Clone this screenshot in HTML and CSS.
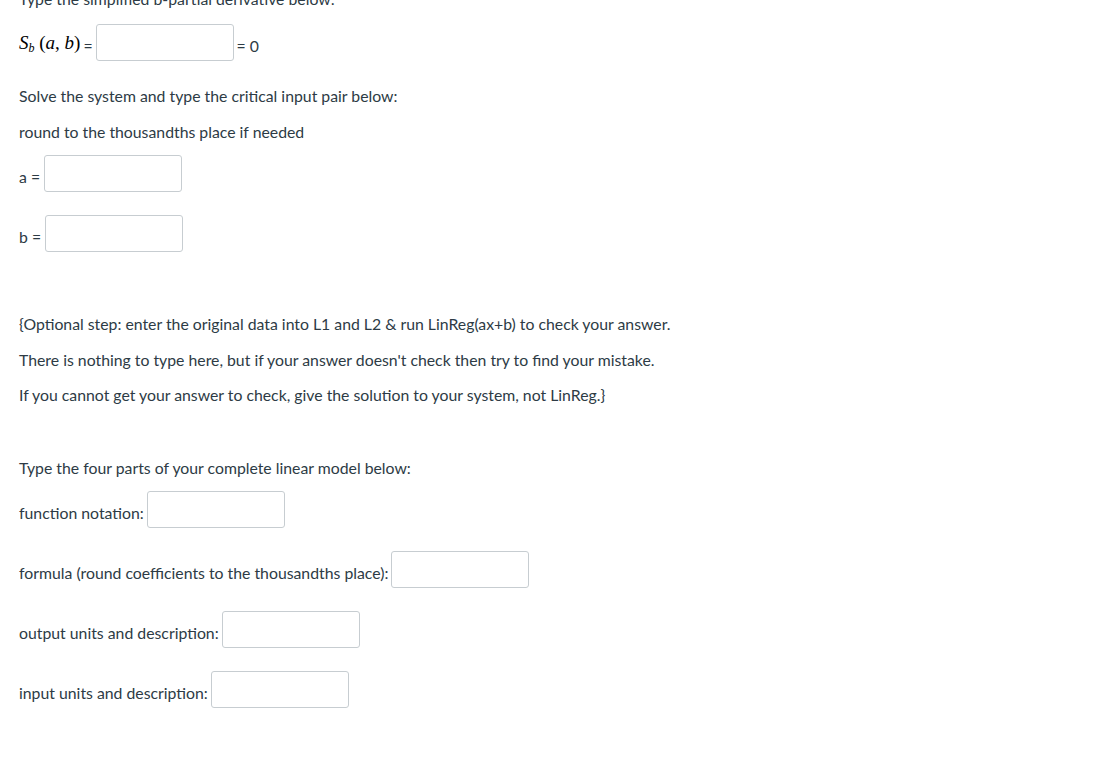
FILE: index.html
```html
<!DOCTYPE html>
<html>
<head>
<meta charset="utf-8">
<link rel="stylesheet" href="styles.css">
</head>
<body>
<div class="page">
  <p class="p">Type the simplified b-partial derivative below:</p>
  <div class="row first">
    <span class="math"><i>S</i><sub><i>b</i></sub> <span class="paren">(</span><i>a</i>, <i>b</i><span class="paren">)</span></span>
    <span class="eq">=</span>
    <span class="box"></span>
    <span class="eq">= 0</span>
  </div>
  <p class="p">Solve the system and type the critical input pair below:</p>
  <p class="p">round to the thousandths place if needed</p>
  <div class="row var"><span class="lbl">a =</span><span class="box"></span></div>
  <div class="row var"><span class="lbl">b =</span><span class="box"></span></div>
  <div class="spacer-a"></div>
  <p class="p">{Optional step: enter the original data into L1 and L2 &amp; run LinReg(ax+b) to check your answer.</p>
  <p class="p">There is nothing to type here, but if your answer doesn't check then try to find your mistake.</p>
  <p class="p">If you cannot get your answer to check, give the solution to your system, not LinReg.}</p>
  <div class="spacer-b"></div>
  <p class="p">Type the four parts of your complete linear model below:</p>
  <div class="row"><span class="lbl">function notation:</span><span class="box"></span></div>
  <div class="row"><span class="lbl">formula (round coefficients to the thousandths place):</span><span class="box"></span></div>
  <div class="row"><span class="lbl">output units and description:</span><span class="box"></span></div>
  <div class="row"><span class="lbl">input units and description:</span><span class="box"></span></div>
</div>
</body>
</html>
```
FILE: styles.css
```css
html, body {
  margin: 0;
  padding: 0;
  background: #ffffff;
}
body {
  font-family: Lato, "Open Sans", sans-serif;
  font-size: 15.8px;
  color: #2d3b45;
}
.page {
  padding: 0 19px;
  margin-top: -13px;
}
.p {
  margin: 0 0 11.5px 0;
  line-height: 24px;
  white-space: nowrap;
}
.row {
  display: flex;
  align-items: center;
  gap: 3px;
  height: 37px;
  margin-bottom: 23px;
}
.row.var {
  gap: 4px;
}
.row.first {
  margin-top: 13px;
  gap: 3px;
}
.math {
  font-family: "Liberation Serif", "DejaVu Serif", serif;
  font-size: 19px;
  color: #000;
  white-space: nowrap;
}
.math sub {
  font-size: 12px;
  vertical-align: -3px;
  line-height: 0;
}
.paren {
  font-style: normal;
}
.eq {
  white-space: nowrap;
  padding-top: 5px;
}
.lbl {
  white-space: nowrap;
  padding-top: 6px;
}
.box {
  display: block;
  box-sizing: border-box;
  width: 138px;
  height: 37px;
  border: 1px solid #c7cdd1;
  border-radius: 3px;
  background: #fff;
  flex: none;
}
.spacer-a {
  height: 37px;
}
.spacer-b {
  height: 37px;
}
```
